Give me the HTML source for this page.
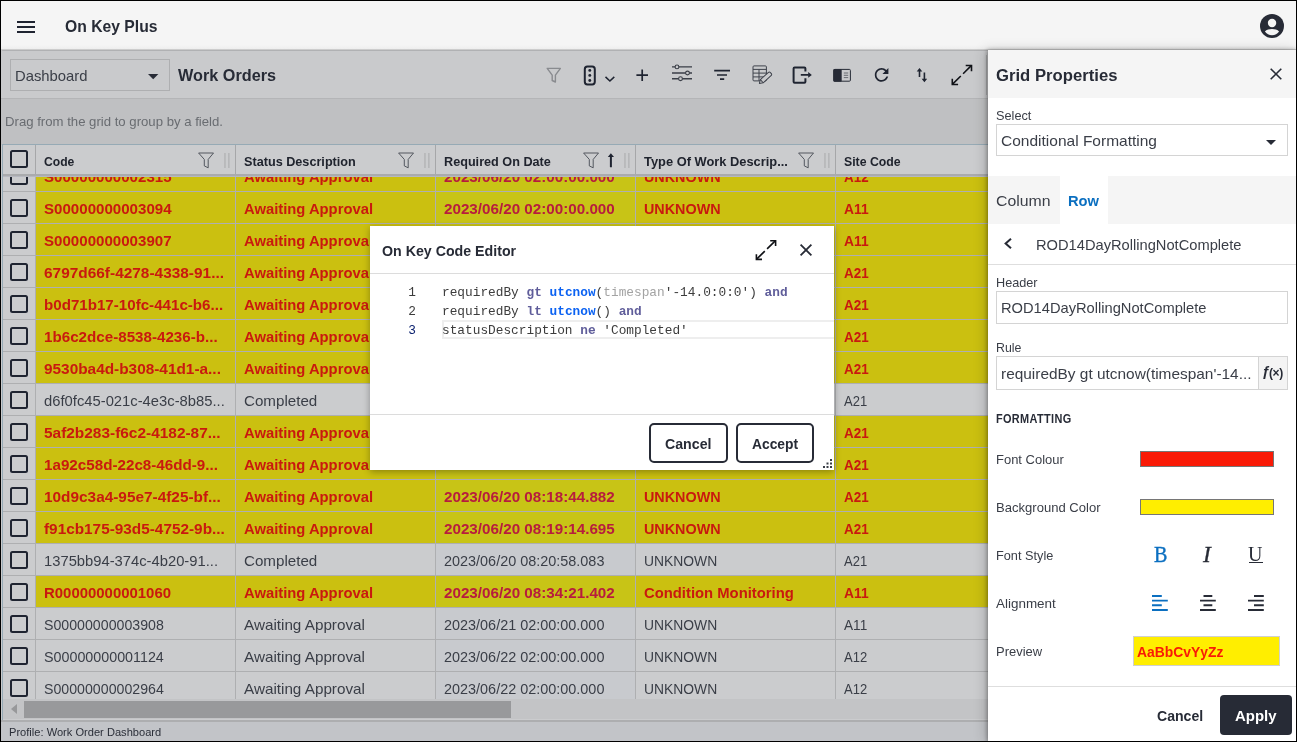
<!DOCTYPE html>
<html lang="en">
<head>
<meta charset="utf-8">
<title>On Key Plus</title>
<style>
*{box-sizing:border-box;margin:0;padding:0}
html,body{width:1297px;height:742px;overflow:hidden;background:#f5f5f5}
body{position:relative;-webkit-font-smoothing:antialiased;font-family:"Liberation Sans",sans-serif;color:#272b36;font-size:15px}
.abs{position:absolute}
#topbar,#main,#panel,#modal{will-change:transform}
svg{display:block;overflow:visible}
.t{position:absolute;white-space:nowrap;line-height:1;transform-origin:0 50%}
/* ---------- top bar ---------- */
#topbar{position:absolute;left:0;top:0;width:1297px;height:50px;background:#f5f5f5;border-bottom:1px solid #cdcdcd}
#topbar .shade{position:absolute;left:0;right:0;bottom:0;height:4px;background:linear-gradient(rgba(245,245,245,0),#eeeeee)}
/* ---------- grid area (dimmed) ---------- */
#main{position:absolute;left:0;top:50px;width:988px;height:692px;background:#c9cacc;overflow:hidden;border-top:1px solid #b0b1b3;border-radius:3px 0 0 0}
#toolbar{position:absolute;left:0;top:-1px;width:988px;height:49px;background:#c9cacc;border-bottom:1px solid #b4b5b7}
#dash{position:absolute;left:10px;top:9px;width:160px;height:32px;border:1px solid #aeafb1;background:#c9cacc}
#group{position:absolute;left:0;top:48px;width:988px;height:46px;background:#bfc0c2}
#grid{position:absolute;left:2px;top:93px;width:990px;height:577px;border:1px solid #96aab5;background:#cbccce;overflow:hidden}
#ghead{position:absolute;left:0;top:0;width:990px;height:31px;background:#cbccce;z-index:3;border-bottom:2px solid #aaabad;box-shadow:0 1px 0 #b6b8c0}
.hc{position:absolute;top:0;height:29px;border-left:1px solid #a6a7a9}
.hc b{transform-origin:0 50%;position:absolute;left:7.5px;top:9px;font-size:13px;line-height:16px;white-space:nowrap;color:#20242e}
.grip{position:absolute;top:8px;width:6px;height:15px}
#gbody{position:absolute;left:0;top:0;width:990px;height:556px;overflow:hidden}
.row{position:absolute;left:0;width:990px;height:32px;border-bottom:1px solid #aeafb1;background:#cbccce}
.row .cb{position:absolute;left:0;top:0;width:32px;height:31px;background:#cbccce}
.row .cb i,.hcb i{position:absolute;left:7px;top:7px;width:18px;height:18px;border:2px solid #1f2431;border-radius:2.5px}
.row .c{position:absolute;top:0;height:31px;width:200px;border-left:1px solid #aeafb1;overflow:hidden}
.row .c span{transform-origin:0 50%;position:absolute;left:8px;top:8px;font-size:15px;line-height:18px;white-space:nowrap;color:#3a3e47}
.row.hl .c{background:#cbc010}
.row.hl .c span{color:#c9190f;font-weight:bold}
.row .c3{background:#c8cace}.row.hl .c3{background:#c8c416}.row.hl .c3 span{color:#b71c3e}
.c1{left:32px}.c2{left:232px}.c3{left:432px}.c4{left:632px}.c5{left:832px;width:160px !important}
#hscroll{position:absolute;left:3px;top:648px;width:985px;height:20px;background:#c3c4c6}
#hscroll .thumb{position:absolute;left:21px;top:2px;width:487px;height:17px;background:#98999b}
#status{position:absolute;left:0;top:669px;width:988px;height:22px;background:#c2c4c8;border-top:2px solid #adaeb0}
/* ---------- side panel ---------- */
#panel{position:absolute;left:988px;top:50px;width:309px;height:692px;background:#fff;box-shadow:-1px 0 4px rgba(0,0,0,.34),-3px 0 12px rgba(0,0,0,.16)}
#phead{position:absolute;left:0;top:0;width:309px;height:48px;background:#f5f5f5}
.lbl{transform-origin:0 50%;position:absolute;left:8px;font-size:13px;line-height:16px;color:#3a3e47;white-space:nowrap}
.inp{position:absolute;left:8px;width:292px;height:33px;border:1px solid #d4d4d4;background:#fff}
.inp span{transform-origin:0 50%;position:absolute;left:4px;top:7px;font-size:15px;line-height:18px;color:#3a3e47;white-space:nowrap}
#tabs{position:absolute;left:0;top:126px;width:309px;height:48px;background:#f5f5f5}
#tabs .act{position:absolute;left:72px;top:0;width:48px;height:48px;background:#fff}
.sw{position:absolute;left:152px;width:134px;height:16px;border:1px solid #767676}
/* ---------- modal ---------- */
#modal{position:absolute;left:370px;top:226px;width:464px;height:244px;background:#fff;box-shadow:0 2px 7px rgba(0,0,0,.32)}
.code{position:absolute;left:0;width:464px;height:19px;font-family:"Liberation Mono",monospace;font-size:12.8px;line-height:19px;white-space:pre;color:#3c3c3c}
.code .n{position:absolute;left:0;width:46px;text-align:right;color:#3c3c3c}
.code .s{position:absolute;left:72px}
.kw{color:#5f5d9a;font-weight:bold}.fn{color:#0b62f2;font-weight:bold}.ty{color:#a3a3a3}.kwb{color:#5f5d9a;font-weight:bold}
.btn{position:absolute;height:40px;border:2px solid #272b36;border-radius:5px;background:#fff}
#frame{position:absolute;left:0;top:0;width:1297px;height:742px;border:1px solid #000;pointer-events:none;z-index:99}
</style>
</head>
<body>
<!-- ================= TOP BAR ================= -->
<div id="topbar">
  <div class="shade"></div>
  <svg class="abs" style="left:17px;top:20px" width="18" height="14" viewBox="0 0 18 14"><path d="M0 2h18M0 7h18M0 12h18" stroke="#1f2431" stroke-width="2.1" fill="none"/></svg>
  <span class="t" id="apptitle" style="transform:scaleX(0.9463);left:65px;top:19px;font-size:16.6px;font-weight:bold">On Key Plus</span>
  <svg class="abs" style="left:1260px;top:14px" width="24" height="24" viewBox="0 0 24 24"><circle cx="12" cy="12" r="12" fill="#272b36"/><circle cx="12.05" cy="8.95" r="4.2" fill="#f5f5f5"/><path d="M4.9 17.5C6.6 15.9 9.2 15.1 12 15.1s5.400.8 7.100 2.400C17.500 19.800 14.900 21.200 12 21.200s-5.500-1.400-7.100-3.700z" fill="#f5f5f5"/></svg>
</div>

<!-- ================= MAIN GRID AREA ================= -->
<div id="main">
  <div id="toolbar">
    <div id="dash"><span class="t" id="dashT" style="transform:scaleX(0.9879);left:4px;top:8px;font-size:15px;color:#3a3e47">Dashboard</span>
      <svg class="abs" style="left:137px;top:14px" width="10.4" height="5.4" viewBox="0 0 10 5"><path d="M0 0h10L5 5z" fill="#272b36"/></svg></div>
    <span class="t" id="wo" style="transform:scaleX(0.9779);left:178px;top:18px;font-size:16.6px;font-weight:bold">Work Orders</span>
    <svg class="abs" style="left:540px;top:0" width="448" height="48" viewBox="540 50 448 48" fill="none" stroke="#1f2431" stroke-linecap="butt">
<path d="M547.2 68.4h13.2l-5 6.8v6.8l-3.2-1.5v-5.3z" stroke="#898b8f" stroke-width="1.4" stroke-linejoin="round"/>
<rect x="584.8" y="66.6" width="10" height="17.8" rx="2.6" stroke-width="2"/>
<circle cx="589.8" cy="70.4" r="1.45" fill="#1f2431" stroke="none"/><circle cx="589.8" cy="75.4" r="1.45" fill="#1f2431" stroke="none"/><circle cx="589.8" cy="80.5" r="1.45" fill="#1f2431" stroke="none"/>
<path d="M605.5 76.9l4.4 4.1 4.4-4.1" stroke-width="1.5"/>
<path d="M642.2 69.4v11.5M636.4 75.1h11.6" stroke-width="1.7"/>
<path d="M672 66.9h20M672 73h20M672 78.7h20" stroke="#3a3e47" stroke-width="1.4"/>
<circle cx="677" cy="66.9" r="1.9" fill="#c9cacc" stroke="#3a3e47" stroke-width="1.1"/><circle cx="687.5" cy="73" r="1.9" fill="#c9cacc" stroke="#3a3e47" stroke-width="1.1"/><circle cx="680.5" cy="78.7" r="1.9" fill="#c9cacc" stroke="#3a3e47" stroke-width="1.1"/>
<path d="M714.2 70.7h15.8M717 75h10M720 79.2h4.2" stroke-width="1.7"/>
<g stroke="#3f434c" stroke-width="1"><rect x="753" y="65.9" width="13.4" height="15" rx="1"/><path d="M753 69.4h13.4M753 73.1h13.4M753 76.9h13.4M759 69.4v11.5"/>
<g transform="translate(759.4 83.4) rotate(-42.5)"><path d="M0 0l3.2-2.1h11a1.2 1.2 0 0 1 1.2 1.2v1.8a1.2 1.2 0 0 1-1.2 1.2h-11z" fill="#c9cacc" stroke-linejoin="round"/><path d="M3.2-2.1v4.2" /></g></g>
<path d="M805.4 71.6v-3.2a1 1 0 0 0-1-1h-9.8a1 1 0 0 0-1 1v13.3a1 1 0 0 0 1 1h9.8a1 1 0 0 0 1-1v-3.4" stroke-width="2"/>
<path d="M800.8 74.9h8" stroke-width="1.6"/><path d="M808.2 72.1l3.6 2.8-3.6 2.8z" fill="#1f2431" stroke="none"/>
<rect x="833.8" y="69.4" width="16.6" height="11.8" rx="1" stroke="#272b36" stroke-width="1"/><rect x="833.3" y="68.9" width="8.4" height="12.8" rx="1" fill="#272b36" stroke="none"/>
<path d="M843.8 73h4.4M843.8 75.3h4.4M843.8 77.6h4.4" stroke="#50545c" stroke-width=".8"/>
<path transform="translate(871.4 64.7) scale(.85)" fill="#1f2431" stroke="none" d="M17.65 6.35C16.2 4.9 14.21 4 12 4c-4.42 0-7.99 3.58-7.99 8s3.57 8 7.99 8c3.73 0 6.84-2.55 7.73-6h-2.08c-.82 2.33-3.04 4-5.65 4-3.31 0-6-2.69-6-6s2.690-6 6-6c1.66 0 3.14.69 4.22 1.78L13 11h7V4l-2.35 2.35z"/>
<path d="M919.5 70.2v6.9M924.4 72.6v7.2" stroke-width="1.6"/><path d="M916.7 71.4l2.8-3.5 2.8 3.5zM921.6 78.8l2.8 3.4 2.8-3.4z" fill="#1f2431" stroke="none"/>
<g stroke="#111318" stroke-width="1.6" transform="translate(-.5 0)"><path d="M952.8 84.4l8.5-8.4M963.6 73.7l8.4-8.3"/><path d="M966.2 65.5h5.8v5.7M952.8 78.8v5.7h5.8"/></g>
<path d="M986.5 55v40" stroke="#abacae" stroke-width="1"/>
</svg>
  </div>
  <div id="group"><span class="t" id="dragT" style="transform:scaleX(1.0123);left:5px;top:16px;font-size:13px;color:#696c71">Drag from the grid to group by a field.</span></div>
  <div id="grid">
    <div id="gbody" style="top:-145px;height:700px">
<div class="row hl" style="top:160px"><div class="cb"><i></i></div><div class="c c1"><span style="transform:scaleX(1.0063)">S00000000002315</span></div><div class="c c2"><span style="transform:scaleX(0.9858)">Awaiting Approval</span></div><div class="c c3"><span style="transform:scaleX(1.0137)">2023/06/20 02:00:00.000</span></div><div class="c c4"><span style="transform:scaleX(0.9575)">UNKNOWN</span></div><div class="c c5"><span style="transform:scaleX(0.8935)">A12</span></div></div>
<div class="row hl" style="top:192px"><div class="cb"><i></i></div><div class="c c1"><span style="transform:scaleX(1.0063)">S00000000003094</span></div><div class="c c2"><span style="transform:scaleX(0.9858)">Awaiting Approval</span></div><div class="c c3"><span style="transform:scaleX(1.0137)">2023/06/20 02:00:00.000</span></div><div class="c c4"><span style="transform:scaleX(0.9575)">UNKNOWN</span></div><div class="c c5"><span style="transform:scaleX(0.9212)">A11</span></div></div>
<div class="row hl" style="top:224px"><div class="cb"><i></i></div><div class="c c1"><span style="transform:scaleX(1.0063)">S00000000003907</span></div><div class="c c2"><span style="transform:scaleX(0.9858)">Awaiting Approval</span></div><div class="c c3"><span style="transform:scaleX(1.0137)">2023/06/20 02:00:00.000</span></div><div class="c c4"><span style="transform:scaleX(0.9575)">UNKNOWN</span></div><div class="c c5"><span style="transform:scaleX(0.9212)">A11</span></div></div>
<div class="row hl" style="top:256px"><div class="cb"><i></i></div><div class="c c1"><span style="transform:scaleX(1.0278)">6797d66f-4278-4338-91...</span></div><div class="c c2"><span style="transform:scaleX(0.9858)">Awaiting Approval</span></div><div class="c c3"><span style="transform:scaleX(1.0238)">2023/06/20 08:11:02.114</span></div><div class="c c4"><span style="transform:scaleX(0.9575)">UNKNOWN</span></div><div class="c c5"><span style="transform:scaleX(0.8935)">A21</span></div></div>
<div class="row hl" style="top:288px"><div class="cb"><i></i></div><div class="c c1"><span style="transform:scaleX(1.0085)">b0d71b17-10fc-441c-b6...</span></div><div class="c c2"><span style="transform:scaleX(0.9858)">Awaiting Approval</span></div><div class="c c3"><span style="transform:scaleX(1.0137)">2023/06/20 08:12:40.300</span></div><div class="c c4"><span style="transform:scaleX(0.9575)">UNKNOWN</span></div><div class="c c5"><span style="transform:scaleX(0.8935)">A21</span></div></div>
<div class="row hl" style="top:320px"><div class="cb"><i></i></div><div class="c c1"><span style="transform:scaleX(1.0112)">1b6c2dce-8538-4236-b...</span></div><div class="c c2"><span style="transform:scaleX(0.9858)">Awaiting Approval</span></div><div class="c c3"><span style="transform:scaleX(1.0137)">2023/06/20 08:13:15.927</span></div><div class="c c4"><span style="transform:scaleX(0.9575)">UNKNOWN</span></div><div class="c c5"><span style="transform:scaleX(0.8935)">A21</span></div></div>
<div class="row hl" style="top:352px"><div class="cb"><i></i></div><div class="c c1"><span style="transform:scaleX(1.025)">9530ba4d-b308-41d1-a...</span></div><div class="c c2"><span style="transform:scaleX(0.9858)">Awaiting Approval</span></div><div class="c c3"><span style="transform:scaleX(1.0137)">2023/06/20 08:14:48.561</span></div><div class="c c4"><span style="transform:scaleX(0.9575)">UNKNOWN</span></div><div class="c c5"><span style="transform:scaleX(0.8935)">A21</span></div></div>
<div class="row" style="top:384px"><div class="cb"><i></i></div><div class="c c1"><span style="transform:scaleX(0.9855)">d6f0fc45-021c-4e3c-8b85...</span></div><div class="c c2"><span style="transform:scaleX(1.0104)">Completed</span></div><div class="c c3"><span style="transform:scaleX(0.9615)">2023/06/20 08:15:33.208</span></div><div class="c c4"><span style="transform:scaleX(0.9246)">UNKNOWN</span></div><div class="c c5"><span style="transform:scaleX(0.8688)">A21</span></div></div>
<div class="row hl" style="top:416px"><div class="cb"><i></i></div><div class="c c1"><span style="transform:scaleX(1.0281)">5af2b283-f6c2-4182-87...</span></div><div class="c c2"><span style="transform:scaleX(0.9858)">Awaiting Approval</span></div><div class="c c3"><span style="transform:scaleX(1.0137)">2023/06/20 08:16:20.745</span></div><div class="c c4"><span style="transform:scaleX(0.9575)">UNKNOWN</span></div><div class="c c5"><span style="transform:scaleX(0.8935)">A21</span></div></div>
<div class="row hl" style="top:448px"><div class="cb"><i></i></div><div class="c c1"><span style="transform:scaleX(1.0129)">1a92c58d-22c8-46dd-9...</span></div><div class="c c2"><span style="transform:scaleX(0.9858)">Awaiting Approval</span></div><div class="c c3"><span style="transform:scaleX(1.0137)">2023/06/20 08:17:31.456</span></div><div class="c c4"><span style="transform:scaleX(0.9575)">UNKNOWN</span></div><div class="c c5"><span style="transform:scaleX(0.8935)">A21</span></div></div>
<div class="row hl" style="top:480px"><div class="cb"><i></i></div><div class="c c1"><span style="transform:scaleX(1.0249)">10d9c3a4-95e7-4f25-bf...</span></div><div class="c c2"><span style="transform:scaleX(0.9858)">Awaiting Approval</span></div><div class="c c3"><span style="transform:scaleX(1.0137)">2023/06/20 08:18:44.882</span></div><div class="c c4"><span style="transform:scaleX(0.9575)">UNKNOWN</span></div><div class="c c5"><span style="transform:scaleX(0.8935)">A21</span></div></div>
<div class="row hl" style="top:512px"><div class="cb"><i></i></div><div class="c c1"><span style="transform:scaleX(1.0228)">f91cb175-93d5-4752-9b...</span></div><div class="c c2"><span style="transform:scaleX(0.9858)">Awaiting Approval</span></div><div class="c c3"><span style="transform:scaleX(1.0137)">2023/06/20 08:19:14.695</span></div><div class="c c4"><span style="transform:scaleX(0.9575)">UNKNOWN</span></div><div class="c c5"><span style="transform:scaleX(0.8935)">A21</span></div></div>
<div class="row" style="top:544px"><div class="cb"><i></i></div><div class="c c1"><span style="transform:scaleX(0.9841)">1375bb94-374c-4b20-91...</span></div><div class="c c2"><span style="transform:scaleX(1.0104)">Completed</span></div><div class="c c3"><span style="transform:scaleX(0.9615)">2023/06/20 08:20:58.083</span></div><div class="c c4"><span style="transform:scaleX(0.9246)">UNKNOWN</span></div><div class="c c5"><span style="transform:scaleX(0.8688)">A21</span></div></div>
<div class="row hl" style="top:576px"><div class="cb"><i></i></div><div class="c c1"><span style="transform:scaleX(0.9951)">R00000000001060</span></div><div class="c c2"><span style="transform:scaleX(0.9858)">Awaiting Approval</span></div><div class="c c3"><span style="transform:scaleX(1.0137)">2023/06/20 08:34:21.402</span></div><div class="c c4"><span style="transform:scaleX(0.988)">Condition Monitoring</span></div><div class="c c5"><span style="transform:scaleX(0.9212)">A11</span></div></div>
<div class="row" style="top:608px"><div class="cb"><i></i></div><div class="c c1"><span style="transform:scaleX(0.9448)">S00000000003908</span></div><div class="c c2"><span style="transform:scaleX(1.0162)">Awaiting Approval</span></div><div class="c c3"><span style="transform:scaleX(0.9615)">2023/06/21 02:00:00.000</span></div><div class="c c4"><span style="transform:scaleX(0.9246)">UNKNOWN</span></div><div class="c c5"><span style="transform:scaleX(0.907)">A11</span></div></div>
<div class="row" style="top:640px"><div class="cb"><i></i></div><div class="c c1"><span style="transform:scaleX(0.9532)">S00000000001124</span></div><div class="c c2"><span style="transform:scaleX(1.0162)">Awaiting Approval</span></div><div class="c c3"><span style="transform:scaleX(0.9615)">2023/06/22 02:00:00.000</span></div><div class="c c4"><span style="transform:scaleX(0.9246)">UNKNOWN</span></div><div class="c c5"><span style="transform:scaleX(0.8688)">A12</span></div></div>
<div class="row" style="top:672px"><div class="cb"><i></i></div><div class="c c1"><span style="transform:scaleX(0.9448)">S00000000002964</span></div><div class="c c2"><span style="transform:scaleX(1.0162)">Awaiting Approval</span></div><div class="c c3"><span style="transform:scaleX(0.9615)">2023/06/22 02:00:00.000</span></div><div class="c c4"><span style="transform:scaleX(0.9246)">UNKNOWN</span></div><div class="c c5"><span style="transform:scaleX(0.8688)">A12</span></div></div>
    </div>
    <div id="ghead">
      <div class="hcb abs" style="left:0;top:0;width:32px;height:29px"><i style="top:5px"></i></div>
      <div class="hc" style="left:32px;width:200px"><b id="h1" style="transform:scaleX(0.9323);">Code</b><svg class="abs" style="left:162px;top:7px" width="16" height="16" viewBox="0 0 16 16"><path d="M.6 1H15.5L10.2 7.4V15.8L6.3 13.9V7.4z" fill="none" stroke="#4d515a" stroke-width=".95" stroke-linejoin="round"/></svg><svg class="grip" style="left:188.400px" width="6" height="15" viewBox="0 0 6 15"><path d="M.2 0h1.500v15H.2zM4.100 0h1.500v15h-1.500z" fill="#b4b5b7"/></svg></div>
      <div class="hc" style="left:232px;width:200px"><b id="h2" style="transform:scaleX(0.9734);">Status Description</b><svg class="abs" style="left:162px;top:7px" width="16" height="16" viewBox="0 0 16 16"><path d="M.6 1H15.5L10.2 7.4V15.8L6.3 13.9V7.4z" fill="none" stroke="#4d515a" stroke-width=".95" stroke-linejoin="round"/></svg><svg class="grip" style="left:188.400px" width="6" height="15" viewBox="0 0 6 15"><path d="M.2 0h1.500v15H.2zM4.100 0h1.500v15h-1.500z" fill="#b4b5b7"/></svg></div>
      <div class="hc" style="left:432px;width:200px"><b id="h3" style="transform:scaleX(0.9727);">Required On Date</b><svg class="abs" style="left:147px;top:7px" width="16" height="16" viewBox="0 0 16 16"><path d="M.6 1H15.5L10.2 7.4V15.8L6.3 13.9V7.4z" fill="none" stroke="#4d515a" stroke-width=".95" stroke-linejoin="round"/></svg><svg class="abs" style="left:170.700px;top:8px" width="8" height="15" viewBox="0 0 8 15"><path d="M3.9 2.5V14.2" stroke="#1f2431" stroke-width="2" fill="none"/><path d="M.8 4L3.9 .2 7 4z" fill="#1f2431"/></svg><svg class="grip" style="left:188.400px" width="6" height="15" viewBox="0 0 6 15"><path d="M.2 0h1.500v15H.2zM4.100 0h1.500v15h-1.500z" fill="#b4b5b7"/></svg></div>
      <div class="hc" style="left:632px;width:200px"><b id="h4" style="transform:scaleX(0.9893);">Type Of Work Descrip...</b><svg class="abs" style="left:162px;top:7px" width="16" height="16" viewBox="0 0 16 16"><path d="M.6 1H15.5L10.2 7.4V15.8L6.3 13.9V7.4z" fill="none" stroke="#4d515a" stroke-width=".95" stroke-linejoin="round"/></svg><svg class="grip" style="left:188.400px" width="6" height="15" viewBox="0 0 6 15"><path d="M.2 0h1.500v15H.2zM4.100 0h1.500v15h-1.500z" fill="#b4b5b7"/></svg></div>
      <div class="hc" style="left:832px;width:160px"><b id="h5" style="transform:scaleX(0.9455);">Site Code</b></div>
    </div>
  </div>
  <div id="hscroll"><div class="thumb"></div>
    <svg class="abs" style="left:8px;top:5px" width="6" height="10" viewBox="0 0 6 10"><path d="M6 0v10L0 5z" fill="#97989a"/></svg></div>
  <div id="status"><span class="t" id="profT" style="transform:scaleX(0.9654);left:9px;top:5px;font-size:11.5px;color:#2a2e38">Profile: Work Order Dashboard</span></div>
</div>

<!-- ================= SIDE PANEL ================= -->
<div id="panel">
  <div id="phead">
    <span class="t" id="gp" style="transform:scaleX(0.971);left:8px;top:17px;font-size:17.2px;font-weight:bold">Grid Properties</span>
    <svg class="abs" style="left:282px;top:18px" width="12" height="12" viewBox="0 0 12 12"><path d="M.7.7l10.6 10.6M11.3.7L.7 11.3" stroke="#272b36" stroke-width="1.6" fill="none"/></svg>
  </div>
  <span class="lbl" id="lSel" style="transform:scaleX(0.9795);top:58px">Select</span>
  <div class="inp" style="top:74px;height:32px"><span id="cfT" style="transform:scaleX(1.0336);">Conditional Formatting</span>
    <svg class="abs" style="left:269px;top:15px" width="10" height="5" viewBox="0 0 10 5"><path d="M0 0h10L5 5z" fill="#272b36"/></svg></div>
  <div id="tabs"><div class="act"></div>
    <span class="t" id="colT" style="transform:scaleX(1.0544);left:8px;top:17px;font-size:15px;color:#3a3e47">Column</span>
    <span class="t" id="rowT" style="transform:scaleX(0.9788);left:80px;top:17px;font-size:15px;font-weight:bold;color:#0b6fc0">Row</span></div>
  <svg class="abs" style="left:16px;top:188px" width="8" height="11" viewBox="0 0 8 11"><path d="M7 .7L1.6 5.5 7 10.3" stroke="#272b36" stroke-width="2" fill="none"/></svg>
  <span class="t" id="rodT" style="transform:scaleX(0.9781);left:48px;top:187px;font-size:15px;color:#3a3e47">ROD14DayRollingNotComplete</span>
  <div class="abs" style="left:0;top:214px;width:309px;height:1px;background:#dedede"></div>
  <span class="lbl" id="lHead" style="transform:scaleX(0.9756);top:225px">Header</span>
  <div class="inp" style="top:241px"><span id="rodI" style="transform:scaleX(0.9781);">ROD14DayRollingNotComplete</span></div>
  <span class="lbl" id="lRule" style="transform:scaleX(0.9495);top:290px">Rule</span>
  <div class="inp" style="top:306px;height:34px"><span id="ruleI" style="transform:scaleX(1.0274);top:8px">requiredBy gt utcnow(timespan'-14...</span>
    <div class="abs" style="left:261px;top:0;width:29px;height:32px;background:#f4f4f4;border-left:1px solid #d4d4d4"><span class="t" style="left:3px;top:5px;font-size:14.5px;font-weight:bold;color:#272b36">ƒ</span><span class="t" style="left:10px;top:7px;font-size:12px;font-weight:bold;color:#272b36;letter-spacing:-.4px">(×)</span></div></div>
  <span class="t" id="fmtT" style="transform:scaleX(0.8738);left:8px;top:363px;font-size:12.5px;font-weight:bold;letter-spacing:.4px;color:#272b36">FORMATTING</span>
  <span class="lbl" id="lFC" style="transform:scaleX(0.9982);top:402px">Font Colour</span><div class="sw" style="top:401px;background:#f91a06"></div>
  <span class="lbl" id="lBG" style="transform:scaleX(1.0042);top:450px">Background Color</span><div class="sw" style="top:449px;background:#ffee00"></div>
  <span class="lbl" id="lFS" style="transform:scaleX(0.979);top:498px">Font Style</span>
  <span class="t" style="left:166px;top:493px;font-family:'Liberation Serif',serif;font-size:23.4px;color:#0b6fc0;transform:scaleX(.86);-webkit-text-stroke:.4px #0b6fc0">B</span>
  <span class="t" style="left:215px;top:493px;font-family:'Liberation Serif',serif;font-size:23.4px;font-style:italic;color:#272b36;-webkit-text-stroke:.3px #272b36">I</span>
  <span class="t" style="left:260px;top:494px;font-family:'Liberation Serif',serif;font-size:20px;color:#272b36">U</span><div class="abs" style="left:260.8px;top:512px;width:14.4px;height:1px;background:#272b36"></div>
  <span class="lbl" id="lAl" style="transform:scaleX(1.0344);top:546px">Alignment</span>
  <svg class="abs" style="left:164px;top:545px" width="16" height="16" viewBox="0 0 16 16"><path d="M0 1H9.8M0 5.6H15.8M0 10.2H9.8M0 15H15.8" stroke="#0b6fc0" stroke-width="1.9" fill="none"/></svg><svg class="abs" style="left:212.1px;top:545px" width="16" height="16" viewBox="0 0 16 16"><path d="M3.5 1H12.3M0 5.6H15.8M3.5 10.2H12.3M0 15H15.8" stroke="#272b36" stroke-width="1.9" fill="none"/></svg><svg class="abs" style="left:260.1px;top:545px" width="16" height="16" viewBox="0 0 16 16"><path d="M6 1H15.8M0 5.6H15.8M6 10.2H15.8M0 15H15.8" stroke="#272b36" stroke-width="1.9" fill="none"/></svg>
  <span class="lbl" id="lPv" style="transform:scaleX(0.9968);top:594px">Preview</span>
  <div class="abs" style="left:145px;top:586px;width:147px;height:30px;background:#ffee00;border:1px solid #d0d0d0"><span class="t" id="pvT" style="transform:scaleX(0.9926);left:3px;top:8px;font-size:14px;font-weight:bold;color:#f91a06">AaBbCvYyZz</span></div>
  <div class="abs" style="left:0;top:636px;width:309px;height:1px;background:#dedede"></div>
  <span class="t" id="pCan" style="transform:scaleX(0.9591);left:169px;top:659px;font-size:14.7px;font-weight:bold">Cancel</span>
  <div class="abs" style="left:232px;top:645px;width:72px;height:40px;background:#272b36;border-radius:4px"><span class="t" id="pApp" style="transform:scaleX(1.0168);left:15px;top:14px;font-size:14.7px;font-weight:bold;color:#fff">Apply</span></div>
</div>

<!-- ================= MODAL ================= -->
<div id="modal">
  <span class="t" id="mt" style="transform:scaleX(0.9159);left:12px;top:17px;font-size:15.5px;font-weight:bold">On Key Code Editor</span>
  <svg class="abs" style="left:386px;top:14px" width="20" height="20" viewBox="756 240 20 20" fill="none" stroke="#101216" stroke-width="1.6"><path d="M756.4 259.4l8.4-8.3M767.1 248.9l8.4-8.3"/><path d="M770.2 240.7h5.4v5.2M756.4 254.2v5.2h5.6"/></svg>
  <svg class="abs" style="left:430px;top:18px" width="12" height="12" viewBox="0 0 12 12"><path d="M.6.6l10.8 10.8M11.4.6L.6 11.4" stroke="#272b36" stroke-width="1.8" fill="none"/></svg>
  <div class="abs" style="left:0;top:47px;width:464px;height:1px;background:#dcdcdc"></div>
  <div class="code" style="top:57px"><span class="n">1</span><span class="s">requiredBy <span class="kw">gt</span> <span class="fn">utcnow</span>(<span class="ty">timespan</span>'-14.0:0:0') <span class="kwb">and</span></span></div>
  <div class="code" style="top:76px"><span class="n">2</span><span class="s">requiredBy <span class="kw">lt</span> <span class="fn">utcnow</span>() <span class="kwb">and</span></span></div>
  <div class="abs" style="left:72px;top:94px;width:392px;height:19px;border:2px solid #eeeeee;border-right:0"></div>
  <div class="code" style="top:95px"><span class="n" style="color:#0b216f">3</span><span class="s">statusDescription <span class="kw">ne</span> 'Completed'</span></div>
  <div class="abs" style="left:0;top:188px;width:464px;height:1px;background:#dcdcdc"></div>
  <div class="btn" style="left:279px;top:197px;width:79px"><span class="t" id="mCan" style="transform:scaleX(0.9653);left:14px;top:12px;font-size:14.7px;font-weight:bold">Cancel</span></div>
  <div class="btn" style="left:366px;top:197px;width:78px"><span class="t" id="mAcc" style="transform:scaleX(0.9411);left:14px;top:12px;font-size:14.7px;font-weight:bold">Accept</span></div>
  <svg class="abs" style="left:453px;top:233px" width="9" height="9" viewBox="0 0 9 9"><path d="M7 0h2v2H7zM7 3.5h2v2H7zM7 7h2v2H7zM3.5 3.5h2v2h-2zM3.5 7h2v2h-2zM0 7h2v2H0z" fill="#3a3e47"/></svg>
</div>
<div id="frame"></div>
</body>
</html>
